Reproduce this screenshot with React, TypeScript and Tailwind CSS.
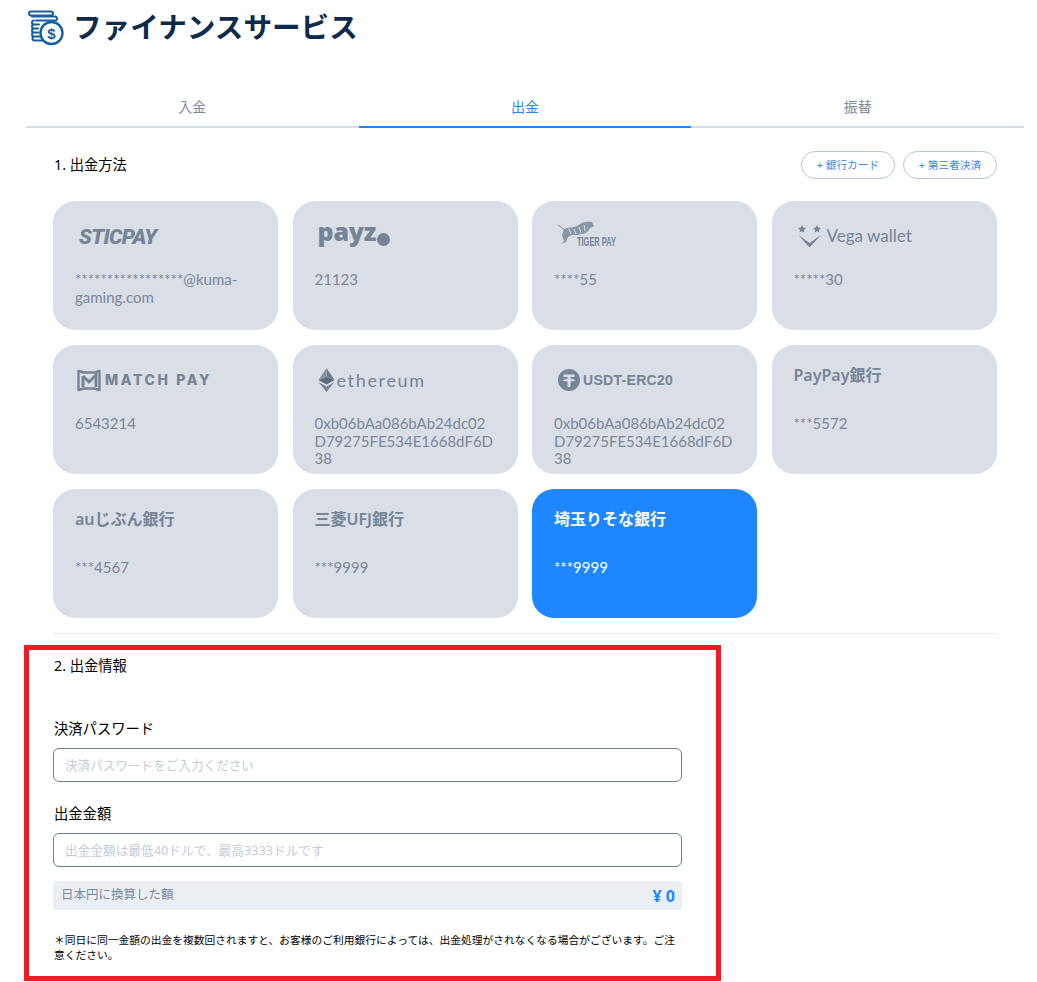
import React from "react";

const font = "font-['Noto_Sans','Noto_Sans_CJK_JP',sans-serif]";

function CoinsIcon() {
  return (
    <svg width="36" height="36" viewBox="0 0 36 36" fill="none" stroke="#14609f" strokeWidth="2" strokeLinecap="round" strokeLinejoin="round">
      <rect x="1" y="1.5" width="24" height="4" rx="2" />
      <path d="M4 6.5h23a2.2 2.2 0 0 1 2 2.2c0 .8-.3 1.3-.8 1.8H8" />
      <path d="M6 10.5a2 2 0 0 0 0 4h5M6 14.5a2 2 0 0 0 0 4h4M6 18.5a2 2 0 0 0 0 4h4.5M6 22.5a2 2 0 0 0 0 4h5.5M6.5 26.5a2 2 0 0 0 0 4h8" />
      <circle cx="23.5" cy="23" r="11" strokeWidth="2.4" fill="#fff" />
      <text x="23.5" y="28.5" textAnchor="middle" fontSize="15" fontWeight="700" fontFamily="Liberation Sans" fill="#14609f" stroke="none">$</text>
    </svg>
  );
}

function Tab({ label, active }: { label: string; active?: boolean }) {
  return (
    <div
      className={
        active
          ? "flex-1 h-[60px] flex items-center justify-center border-b-2 border-[#1e87ff] text-[#1e87ff] text-sm pt-[20px]"
          : "flex-1 h-[60px] flex items-center justify-center border-b-2 border-[#d8dce8] text-[#7f8a9a] text-sm pt-[20px]"
      }
    >
      {label}
    </div>
  );
}

function AddButton({ label }: { label: string }) {
  return (
    <div className="w-[94px] h-[28px] rounded-full border border-[#b8c7de] flex items-center justify-center text-[10.7px] text-[#3f86ec]">
      + {label}
    </div>
  );
}

const logoColor = "#768497";

function Sticpay() {
  return <span className="ml-[4px] mt-[2px] font-['Roboto',sans-serif] italic font-black text-[21px] leading-[26px] tracking-[-0.6px] text-[#768497]">STICPAY</span>;
}

function Payz() {
  return (
    <span className="ml-[3px] flex items-end h-[24px]">
      <span className="font-['Noto_Sans',sans-serif] font-black text-[25px] leading-[24px] tracking-[-0.2px] text-[#768497] -translate-y-[3px]">payz</span>
      <span className="w-[13px] h-[13px] rounded-full bg-[#768497] ml-[1px]" />
    </span>
  );
}

function TigerPay() {
  return (
    <span className="relative block w-[62px] h-[30px] ml-[4px] mt-[-1px]">
      <svg className="absolute left-0 top-0" width="40" height="26" viewBox="0 0 40 26" fill="none">
        <path d="M0 4 L7 9" stroke={logoColor} strokeWidth="0.8" />
        <path d="M6 8 C10 6 15 7 19 5 C23 1 28 0 34 1 L36 5 L32 7 C30 11 27 13 23 13 L20 14 L14 14 L10 16 L8 21 L3 23 L6 20 L4 14 Z" fill={logoColor} fillOpacity="0.8" />
        <path d="M11 8 L13 13 M16 8 L18 13 M21 6 L23 12 M26 4 L27 10" stroke="#d9dee7" strokeWidth="1" />
      </svg>
      <span className="absolute left-[19px] top-[15px] font-['Liberation_Sans',sans-serif] font-bold text-[12px] leading-[13px] scale-x-[0.62] origin-left whitespace-nowrap text-[#768497]">TIGER PAY</span>
    </span>
  );
}

function Vega() {
  return (
    <span className="flex items-center ml-[3px] h-[28px]">
      <svg width="26" height="24" viewBox="0 0 26 24" fill={logoColor}>
        <path d="M5 1l1.2 2.6 2.8.3-2.1 1.9.6 2.8L5 7.2 2.5 8.6l.6-2.8L1 3.9l2.8-.3zM20 1l1.2 2.6 2.8.3-2.1 1.9.6 2.8L20 7.2l-2.5 1.4.6-2.8L16 3.9l2.8-.3z" />
        <path d="M1.5 11 L12.5 19 L24 11 L13 23 L12 23 Z" />
      </svg>
      <span className="ml-[4px] font-['Lato',sans-serif] text-[17px] leading-[20px] text-[#768497] whitespace-nowrap">Vega wallet</span>
    </span>
  );
}

function MatchPay() {
  return (
    <span className="flex items-center h-[28px] ml-[2px]">
      <svg width="24" height="23" viewBox="0 0 24 23" fill="none">
        <path d="M1.5 2 L7 3.5 H18 L22.5 2 V21 L17 19.5 H7 L1.5 21 Z" stroke={logoColor} strokeWidth="2.4" strokeLinejoin="round" />
        <path d="M6 7 L12 13 L19 6 V18 M6 7 V18" stroke={logoColor} strokeWidth="3" />
      </svg>
      <span className="ml-[4px] font-['Inter',sans-serif] font-extrabold text-[14px] tracking-[2.6px] leading-[20px] text-[#768497] whitespace-nowrap">MATCH PAY</span>
    </span>
  );
}

function Ethereum() {
  return (
    <span className="flex items-center h-[28px] ml-[3px]">
      <svg width="17" height="24" viewBox="0 0 17 24">
        <path d="M8.5 0 L16.5 12 L8.5 9 Z" fill="#6c7a8d" />
        <path d="M8.5 0 L0.5 12 L8.5 9 Z" fill="#87939f" />
        <path d="M0.5 12 L8.5 9 L16.5 12 L8.5 16.5 Z" fill="#5d6a7c" />
        <path d="M0.5 14 L8.5 18.5 L16.5 14 L8.5 24 Z" fill="#798697" />
      </svg>
      <span className="ml-[2px] font-['Lato',sans-serif] text-[18px] leading-[22px] tracking-[1.65px] text-[#768497] whitespace-nowrap">ethereum</span>
    </span>
  );
}

function Usdt() {
  return (
    <span className="flex items-center h-[28px] ml-[4px]">
      <svg width="22" height="22" viewBox="0 0 22 22">
        <circle cx="11" cy="11" r="11" fill={logoColor} />
        <path d="M5.5 5.5h11v2.6h-4v2c2.6.1 4.6.6 4.6 1.2s-2 1.1-4.6 1.2V18h-3v-5.5c-2.6-.1-4.6-.6-4.6-1.2s2-1.1 4.6-1.2v-2h-4z" fill="#d9dee7" />
      </svg>
      <span className="ml-[3px] font-['Liberation_Sans',sans-serif] font-bold text-[14px] leading-[20px] tracking-[0.3px] text-[#768497] whitespace-nowrap">USDT-ERC20</span>
    </span>
  );
}

function BankName({ name, active }: { name: string; active?: boolean }) {
  return <span className={active ? "mt-px text-base leading-4 font-semibold text-white" : "mt-px text-base leading-4 font-semibold text-[#768497]"}>{name}</span>;
}

function Card({ logo, value, active }: { logo: React.ReactNode; value: string; active?: boolean }) {
  return (
    <div className={active ? "h-[129px] rounded-[22px] bg-[#1e87ff] pt-[21px] px-[22px] overflow-hidden" : "h-[129px] rounded-[22px] bg-[#d9dee7] pt-[21px] px-[22px] overflow-hidden"}>
      <div className="h-[29px] mb-[20px] flex items-start">{logo}</div>
      <div className={active ? "font-['Lato','Noto_Sans',sans-serif] text-[15px] leading-[17.5px] [overflow-wrap:anywhere] text-white" : "font-['Lato','Noto_Sans',sans-serif] text-[15px] leading-[17.5px] [overflow-wrap:anywhere] text-[#7d8798]"}>{value}</div>
    </div>
  );
}

const addr = "0xb06bAa086bAb24dc02D79275FE534E1668dF6D38";

export default function App() {
  return (
    <div className={`${font} relative w-[1037px] h-[982px] bg-white overflow-hidden`}>
      <header className="h-[54px] pl-[28px] pt-[10px] flex items-start">
        <CoinsIcon />
        <h1 className="ml-[9px] -mt-[2px] text-[28.6px] leading-[38px] font-semibold text-[#0f2a4a]">ファイナンスサービス</h1>
      </header>

      <nav className="ml-[26px] w-[998px] mt-[14px] flex">
        <Tab label="入金" />
        <Tab label="出金" active />
        <Tab label="振替" />
      </nav>

      <main className="ml-[53px] mr-[40px]">
        <div className="mt-[23px] h-[28px] flex items-center justify-between">
          <span className="ml-px text-[14.3px] text-black">1. 出金方法</span>
          <div className="flex gap-2">
            <AddButton label="銀行カード" />
            <AddButton label="第三者決済" />
          </div>
        </div>

        <div className="mt-[22px] grid grid-cols-[repeat(4,225px)] gap-x-[14.5px] gap-y-[15px]">
          <Card logo={<Sticpay />} value="*****************@kuma-gaming.com" />
          <Card logo={<Payz />} value="21123" />
          <Card logo={<TigerPay />} value="****55" />
          <Card logo={<Vega />} value="*****30" />
          <Card logo={<MatchPay />} value="6543214" />
          <Card logo={<Ethereum />} value={addr} />
          <Card logo={<Usdt />} value={addr} />
          <Card logo={<BankName name="PayPay銀行" />} value="***5572" />
          <Card logo={<BankName name="auじぶん銀行" />} value="***4567" />
          <Card logo={<BankName name="三菱UFJ銀行" />} value="***9999" />
          <Card logo={<BankName name="埼玉りそな銀行" active />} value="***9999" active />
        </div>

        <div className="mt-[15px] border-t border-[#e8eaee]" />

        <section className="w-[629px]">
          <h2 className="ml-px mt-[22px] text-[14.3px] leading-5 font-normal text-black">2. 出金情報</h2>

          <label className="ml-px block mt-[43px] text-[14.3px] leading-5 text-black">決済パスワード</label>
          <input
            className="block mt-[9px] w-full h-[34px] rounded-md border border-[#6f7f96] pl-[11px] pr-3 text-[12.6px] outline-none placeholder:text-[#c5ccd8]"
            placeholder="決済パスワードをご入力ください"
            readOnly
          />

          <label className="ml-px block mt-[22px] text-[14.3px] leading-5 text-black">出金金額</label>
          <input
            className="block mt-[9px] w-full h-[34px] rounded-md border border-[#6f7f96] pl-[11px] pr-3 text-[12.7px] outline-none placeholder:text-[#c5ccd8]"
            placeholder="出金金額は最低40ドルで、最高3333ドルです"
            readOnly
          />

          <div className="mt-[14px] h-[29px] rounded bg-[#ebeef2] pl-2 pr-[7px] flex items-center justify-between">
            <span className="text-[12.5px] -mt-px text-[#7d8798]">日本円に換算した額</span>
            <span className="text-[16px] font-bold text-[#1e87ff]">¥ 0</span>
          </div>

          <p className="ml-px mt-[22px] text-[10.76px] leading-[15px] text-black">
            ＊同日に同一金額の出金を複数回されますと、お客様のご利用銀行によっては、出金処理がされなくなる場合がございます。ご注意ください。
          </p>
        </section>
      </main>

      <div className="absolute left-[24px] top-[645px] w-[697px] h-[336px] border-[5px] border-[#ed1c24] pointer-events-none" />
    </div>
  );
}
